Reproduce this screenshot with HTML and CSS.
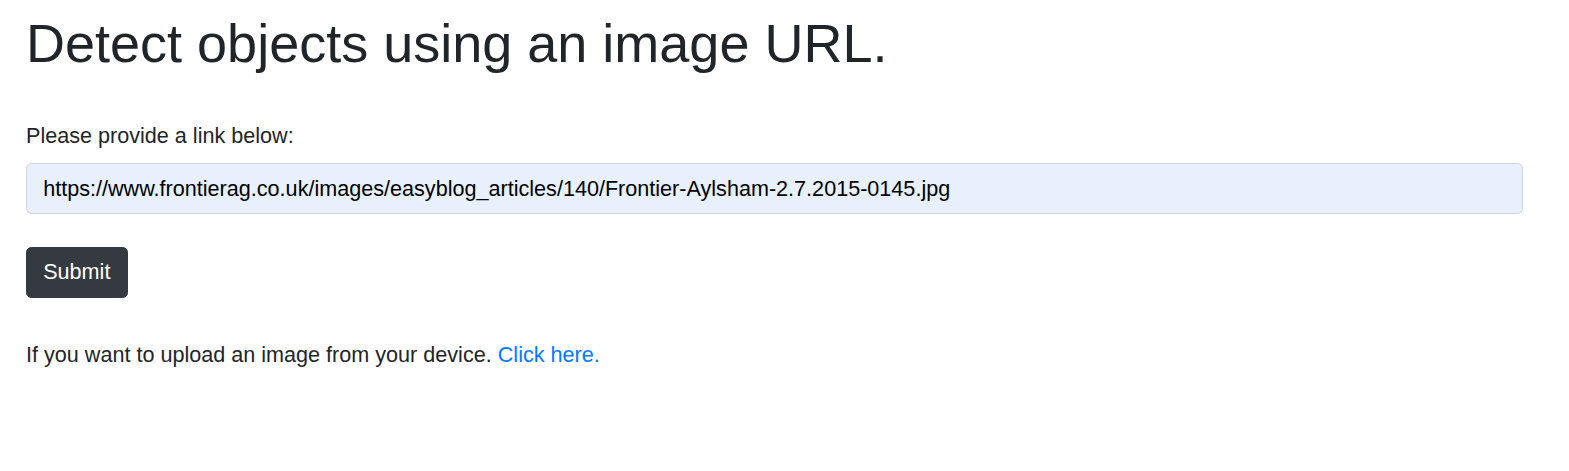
FILE: index.html
```html
<!DOCTYPE html>
<html lang="en">
<head>
<meta charset="utf-8">
<title>Detect objects</title>
<link rel="stylesheet" href="styles.css">
</head>
<body>
<main class="page">
  <h1 class="title">Detect objects using an image URL.</h1>
  <form class="url-form">
    <label class="label" for="url">Please provide a link below:</label>
    <input class="url-input" id="url" type="text" value="https://www.frontierag.co.uk/images/easyblog_articles/140/Frontier-Aylsham-2.7.2015-0145.jpg">
    <button class="submit" type="button">Submit</button>
  </form>
  <p class="note">If you want to upload an image from your device. <a class="link" href="#">Click here.</a></p>
</main>
</body>
</html>
```
FILE: styles.css
```css
* { box-sizing: border-box; }
html, body { margin: 0; background: #fff; }
body {
  font-family: "Liberation Sans", Arial, sans-serif;
  color: #212529;
  font-size: 21.6px;
  line-height: 1.5;
}
.page {
  padding: 10.5px 46px 0 26px;
}
.title {
  font-size: 54px;
  font-weight: 400;
  line-height: 1.2;
  margin: 0 0 44.5px;
}
.url-form {
  display: flex;
  flex-direction: column;
  align-items: flex-start;
}
.label {
  margin-bottom: 10.8px;
}
.url-input {
  width: 100%;
  height: 51.3px;
  padding: 0 16.2px;
  font-family: inherit;
  font-size: 21.6px;
  color: #000;
  background: #e8f0fe;
  border: 1.35px solid #ced4da;
  border-radius: 5.4px;
  margin-bottom: 32.7px;
  outline: none;
}
.submit {
  font-family: inherit;
  font-size: 21.6px;
  line-height: 1.5;
  padding: 8.1px 16.2px;
  color: #fff;
  background: #343a40;
  border: 1.35px solid #343a40;
  border-radius: 5.4px;
}
.note {
  margin: 41.6px 0 0;
}
.link {
  color: #007bff;
  text-decoration: none;
}
```
